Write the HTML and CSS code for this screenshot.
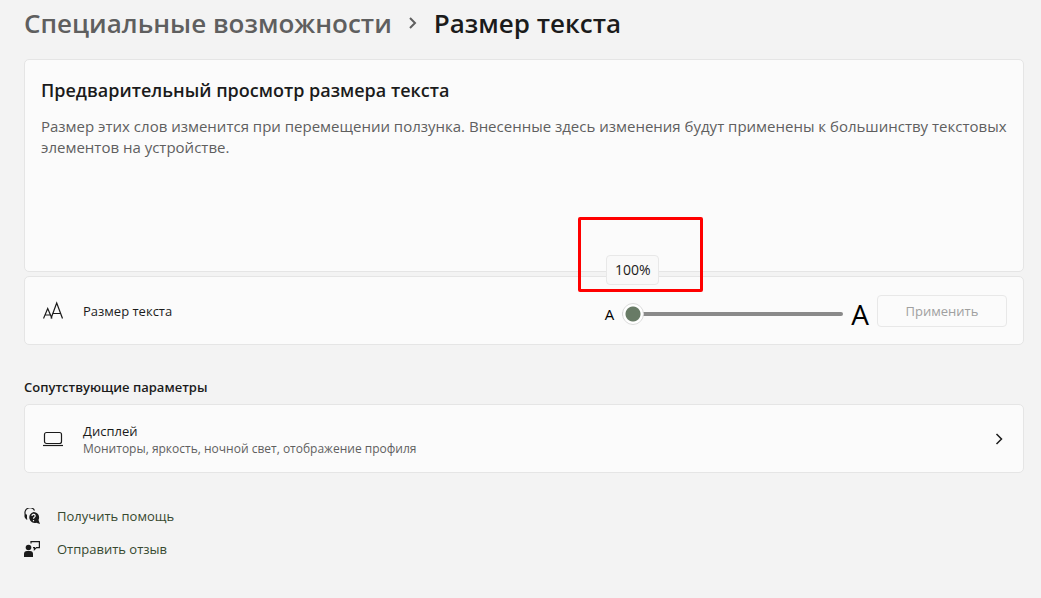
FILE: index.html
```html
<!DOCTYPE html>
<html lang="ru">
<head>
    <meta charset="UTF-8">
    <meta name="viewport" content="width=device-width, initial-scale=1.0">
    <title>Размер текста</title>
    <link rel="stylesheet" href="styles.css">
</head>
<body>
    <nav class="breadcrumb">
        <a class="breadcrumb-link" href="#">Специальные возможности</a>
        <svg class="breadcrumb-arrow" viewBox="0 0 10 14" aria-hidden="true"><path d="M2 2l5 5-5 5"/></svg>
        <h1>Размер текста</h1>
    </nav>

    <main>
        <section class="card preview">
            <h2>Предварительный просмотр размера текста</h2>
            <p>Размер этих слов изменится при перемещении ползунка. Внесенные здесь изменения будут применены к большинству текстовых элементов на устройстве.</p>
        </section>

        <form class="card row">
            <svg class="icon" viewBox="0 0 20 20" aria-hidden="true">
                <path d="M.5 17.500 4.700 7.500l4.300 10M2 14h5.400M8 17.500l5.700-15.500 5.800 15.500M10 12.500h7.500"/>
            </svg>
            <label class="row-label" for="size">Размер текста</label>
            <div class="scale">
                <span class="small-a">A</span>
                <div class="slider">
                    <input id="size" type="range" min="100" max="225" value="100">
                    <output class="tooltip" for="size">100%</output>
                    <div class="frame"></div>
                </div>
                <span class="big-a">A</span>
            </div>
            <button class="apply" type="submit" disabled>Применить</button>
        </form>

        <h3>Сопутствующие параметры</h3>
        <a class="card row" href="#">
            <svg class="icon" viewBox="0 0 20 20" aria-hidden="true">
                <rect x="1.500" y="3.500" width="17" height="11" rx="2"/>
                <path d="M0 16.500h20"/>
            </svg>
            <span class="row-text">
                <span class="row-label">Дисплей</span>
                <span class="row-hint">Мониторы, яркость, ночной свет, отображение профиля</span>
            </span>
            <svg class="chevron" viewBox="0 0 16 16" aria-hidden="true"><path d="M5.500 3l5 5-5 5"/></svg>
        </a>
    </main>

    <footer>
        <a class="help" href="#">
            <svg class="help-icon" viewBox="0 0 16 16" aria-hidden="true">
                <path class="line" d="M1.500 7A5 5 0 0 1 10.500 2.500M1.500 9l1.500 2.500"/>
                <path d="M.5 6.500h2.500v4H1.500L.5 9z"/>
                <path d="M9.500 4a5.500 5.500 0 0 1 5 8l1.500 4-3.800-1.200A5.500 5.500 0 1 1 9.500 4z"/>
                <path class="mark" d="M8 8a1.600 1.600 0 1 1 2.400 1.300c-.7.4-.9.6-.9 1.400M9.500 12v1.200"/>
            </svg>
            Получить помощь
        </a>
        <a class="help" href="#">
            <svg class="help-icon" viewBox="0 0 16 16" aria-hidden="true">
                <circle cx="4.500" cy="6.500" r="2.800"/>
                <path d="M0 16v-3a3 3 0 0 1 3-3h3a3 3 0 0 1 3 3v3z"/>
                <path class="line" d="M7 2.500V.600h8.400v6h-3l-2 2v-2H9"/>
            </svg>
            Отправить отзыв
        </a>
    </footer>
</body>
</html>
```
FILE: styles.css
```css
* {
    box-sizing: border-box;
    font-family: "Open Sans", "Noto Sans", sans-serif;
}

body {
    margin: 0;
    padding: 3px 17px 24px 24px;
    background-color: #f3f3f3;
    color: #1b1b1b;
    font-size: 13px;
    line-height: 20px;
}

h1, h2, h3, p {
    margin: 0;
}

a {
    color: inherit;
    text-decoration: none;
}

svg {
    flex: none;
    fill: none;
    stroke: #1b1b1b;
}

.breadcrumb {
    display: flex;
    align-items: center;
    gap: 16px;
    font-size: 26px;
    line-height: 40px;
    font-weight: 600;
}

.breadcrumb-link {
    color: #5f5f5f;
}

.breadcrumb-arrow {
    width: 10px;
    height: 14px;
    stroke: #5f5f5f;
    stroke-width: 2;
}

h1 {
    font-size: 26px;
    font-weight: 600;
}

.card {
    background-color: #fbfbfb;
    border: 1px solid #e5e5e5;
    border-radius: 5px;
}

.preview {
    min-height: 213px;
    margin-top: 16px;
    padding: 16px;
}

h2 {
    margin-bottom: 12px;
    font-size: 18px;
    line-height: 28px;
    font-weight: 600;
}

.preview p {
    color: #5f5f5f;
    font-size: 15px;
    line-height: 21px;
}

.row {
    display: flex;
    align-items: center;
    min-height: 69px;
    margin-top: 4px;
    padding: 0 16px;
}

.icon {
    width: 20px;
    height: 20px;
    margin: 0 20px 0 2px;
    stroke-width: 1.200;
}

.scale {
    display: flex;
    align-items: center;
    gap: 8px;
    margin: 0 8px 0 auto;
    padding-top: 6px;
    color: #000;
}

.small-a {
    font-size: 15px;
}

.big-a {
    font-size: 28px;
}

.slider {
    position: relative;
    display: flex;
}

.slider input {
    width: 221px;
    height: 22px;
    margin: 0;
    appearance: none;
    background: none;
}

.slider input::-webkit-slider-runnable-track {
    height: 4px;
    border-radius: 2px;
    background-color: #8a8a8a;
}

.slider input::-webkit-slider-thumb {
    appearance: none;
    width: 22px;
    height: 22px;
    margin-top: -9px;
    border: 1px solid #dcdcdc;
    border-radius: 50%;
    background: radial-gradient(circle, #687b66 7px, #fff 8px);
}

.tooltip {
    position: absolute;
    left: -16px;
    bottom: 40px;
    width: 53px;
    padding: 4px 0;
    border: 1px solid #e8e8e8;
    border-radius: 4px;
    background-color: #f9f9f9;
    color: #1b1b1b;
    font-size: 14px;
    text-align: center;
}

/* red highlight around the current value */
.frame {
    position: absolute;
    left: -44px;
    bottom: 33px;
    width: 125px;
    height: 75px;
    border: 3px solid #f00;
    border-radius: 2px;
}

.apply {
    width: 130px;
    height: 32px;
    border: 1px solid #e8e8e8;
    border-radius: 4px;
    background-color: #fbfbfb;
    color: #a0a0a0;
    font-size: 13px;
}

h3 {
    margin-top: 32px;
    margin-bottom: 7px;
    font-size: 13px;
    font-weight: 600;
}

.row-text {
    display: flex;
    flex-direction: column;
}

.row-hint {
    color: #5f5f5f;
    font-size: 12px;
    line-height: 16px;
}

.chevron {
    width: 16px;
    height: 16px;
    margin-left: auto;
    stroke-width: 1.500;
}

footer {
    display: flex;
    flex-direction: column;
    align-items: flex-start;
    gap: 13px;
    margin-top: 33px;
}

.help {
    display: flex;
    align-items: center;
    gap: 17px;
    color: #36482f;
}

.help-icon {
    width: 16px;
    height: 16px;
    fill: #1b1b1b;
    stroke: none;
}

.help-icon .line {
    fill: none;
    stroke: #1b1b1b;
    stroke-width: 1.200;
}

.help-icon .mark {
    fill: none;
    stroke: #f3f3f3;
    stroke-width: 1.200;
}
```
